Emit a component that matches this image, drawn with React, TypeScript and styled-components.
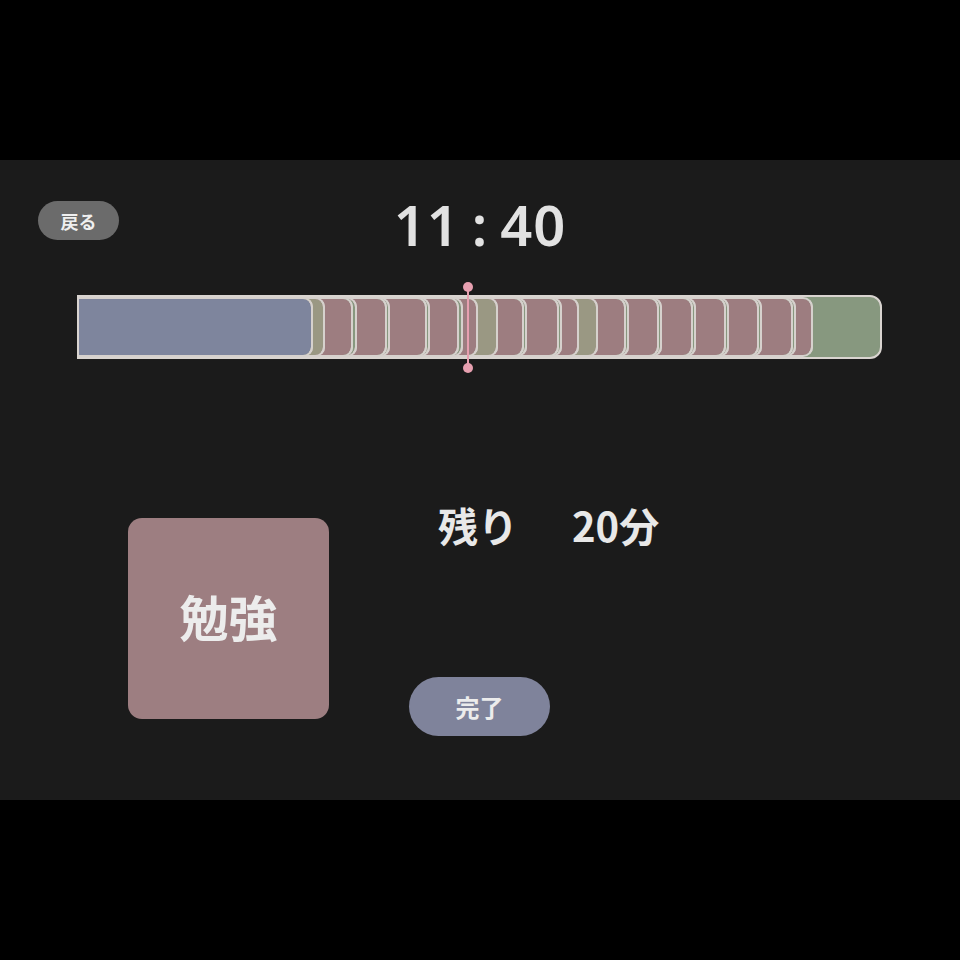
import styled, { createGlobalStyle } from "styled-components";

const Global = createGlobalStyle`
  html, body {
    margin: 0;
    padding: 0;
    background: #000;
  }
  body {
    font-family: "Noto Sans CJK JP", "Noto Sans", sans-serif;
  }
`;

const Screen = styled.div`
  width: 960px;
  height: 960px;
  background: #000;
  display: flex;
  align-items: center;
`;

const Panel = styled.div`
  width: 960px;
  height: 640px;
  background: #1b1b1b;
  display: flex;
  flex-direction: column;
`;

const Header = styled.div`
  position: relative;
  height: 100px;
  display: flex;
  justify-content: center;
  align-items: flex-start;
`;

const BackButton = styled.button`
  position: absolute;
  left: 38px;
  top: 41px;
  width: 81px;
  height: 39px;
  border: none;
  border-radius: 20px;
  background: #6b6b6b;
  color: #efefef;
  font-family: inherit;
  font-size: 18px;
  font-weight: 700;
  padding: 0;
`;

const Clock = styled.div`
  margin-top: 24px;
  color: #e2e2e2;
  font-family: "Noto Sans", sans-serif;
  font-size: 56px;
  font-weight: 600;
  line-height: 80px;
  letter-spacing: 1px;
`;

const Colon = styled.span`
  margin: 0 12px;
`;

const BarWrap = styled.div`
  position: relative;
  margin: 35px 0 0 77px;
  width: 805px;
  height: 64px;
`;

const Bar = styled.div`
  display: flex;
  width: 100%;
  height: 100%;
  box-sizing: border-box;
  border: 2px solid #d9d4d0;
  border-radius: 0 12px 12px 0;
  background: #87987f;
  overflow: hidden;
`;

// each block tucks its left end under the rounded right end of the one before
const Segment = styled.div<{ $color: string; $w: number; $z: number; $first?: boolean }>`
  position: relative;
  z-index: ${(p) => p.$z};
  flex: none;
  width: ${(p) => p.$w}px;
  height: 100%;
  margin-left: ${(p) => (p.$first ? 0 : -10)}px;
  box-sizing: border-box;
  background: ${(p) => p.$color};
  border: 2px solid #d6d1cd;
  border-left: none;
  border-top-color: transparent;
  border-bottom-color: transparent;
  border-radius: 0 10px 10px 0;
  background-clip: padding-box;
  &::before {
    content: "";
    position: absolute;
    inset: -2px -2px -2px 0;
    border: 2px solid #d6d1cd;
    border-left: none;
    border-radius: 0 10px 10px 0;
    pointer-events: none;
  }
`;

const Marker = styled.div`
  position: absolute;
  z-index: 100;
  left: 390px;
  top: -9px;
  bottom: -10px;
  width: 2px;
  background: #e7a0b0;
  &::before,
  &::after {
    content: "";
    position: absolute;
    left: -4px;
    width: 10px;
    height: 10px;
    border-radius: 50%;
    background: #e7a0b0;
  }
  &::before {
    top: -4px;
  }
  &::after {
    bottom: -4px;
  }
`;

const Lower = styled.div`
  display: flex;
  margin-top: 159px;
  padding-left: 128px;
`;

const TaskCard = styled.div`
  width: 201px;
  height: 201px;
  border-radius: 14px;
  background: #9d7e81;
  display: flex;
  align-items: center;
  justify-content: center;
  padding-bottom: 6px;
  box-sizing: border-box;
  color: #ececec;
  font-size: 49px;
  font-weight: 700;
`;

const Info = styled.div`
  display: flex;
  flex-direction: column;
  align-items: flex-start;
  margin-left: 80px;
`;

const Remaining = styled.div`
  display: flex;
  gap: 54px;
  margin-left: 29px;
  margin-top: -25px;
  color: #e8e8e8;
  font-size: 40px;
  font-weight: 700;
  line-height: 64px;
`;

const DoneButton = styled.button`
  margin-top: 120px;
  width: 141px;
  height: 59px;
  border: none;
  border-radius: 30px;
  background: #7f839b;
  color: #ececec;
  font-family: inherit;
  font-size: 24px;
  font-weight: 700;
  padding: 0;
`;

const BLUE = "#7e859d";
const OLIVE = "#9a9883";
const PINK = "#9d7d80";
const GREEN = "#87987f";

// right edges (page x) of each block along the bar
const segments: [number, string][] = [
  [313, BLUE],
  [325, OLIVE],
  [353, PINK],
  [357, GREEN],
  [387, PINK],
  [390, GREEN],
  [427, PINK],
  [430, GREEN],
  [459, PINK],
  [463, GREEN],
  [478, PINK],
  [498, OLIVE],
  [524, PINK],
  [527, GREEN],
  [559, PINK],
  [562, GREEN],
  [579, PINK],
  [598, OLIVE],
  [626, PINK],
  [629, GREEN],
  [659, PINK],
  [662, GREEN],
  [693, PINK],
  [696, GREEN],
  [726, PINK],
  [729, GREEN],
  [759, PINK],
  [762, GREEN],
  [793, PINK],
  [796, GREEN],
  [813, PINK],
];

const App = () => {
  let prev = 79;
  return (
    <Screen>
      <Global />
      <Panel>
        <Header>
          <BackButton>戻る</BackButton>
          <Clock>
            11<Colon>:</Colon>40
          </Clock>
        </Header>
        <BarWrap>
          <Bar>
            {segments.map(([end, color], i) => {
              const w = end - prev + (i === 0 ? 0 : 10);
              prev = end;
              return (
                <Segment
                  key={i}
                  $w={w}
                  $color={color}
                  $z={segments.length - i}
                  $first={i === 0}
                />
              );
            })}
          </Bar>
          <Marker />
        </BarWrap>
        <Lower>
          <TaskCard>勉強</TaskCard>
          <Info>
            <Remaining>
              <span>残り</span>
              <span>20分</span>
            </Remaining>
            <DoneButton>完了</DoneButton>
          </Info>
        </Lower>
      </Panel>
    </Screen>
  );
};

export default App;
